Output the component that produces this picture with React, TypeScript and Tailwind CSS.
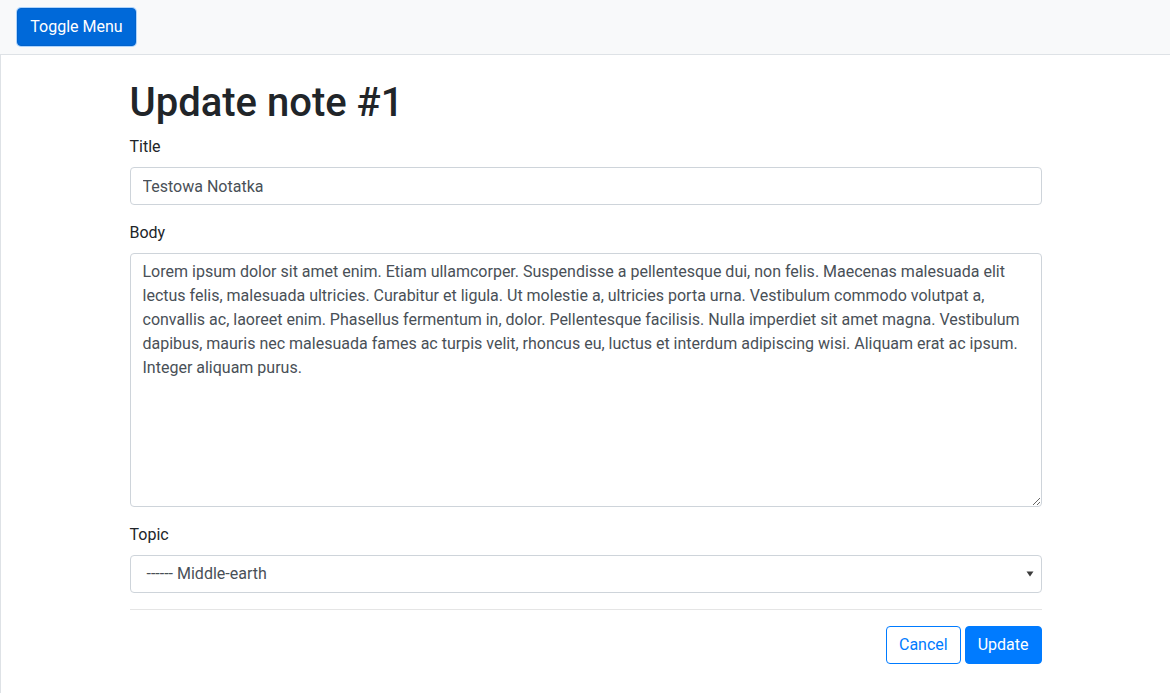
import React from "react";

const body =
  "Lorem ipsum dolor sit amet enim. Etiam ullamcorper. Suspendisse a pellentesque dui, non felis. Maecenas malesuada elit lectus felis, malesuada ultricies. Curabitur et ligula. Ut molestie a, ultricies porta urna. Vestibulum commodo volutpat a, convallis ac, laoreet enim. Phasellus fermentum in, dolor. Pellentesque facilisis. Nulla imperdiet sit amet magna. Vestibulum dapibus, mauris nec malesuada fames ac turpis velit, rhoncus eu, luctus et interdum adipiscing wisi. Aliquam erat ac ipsum. Integer aliquam purus.";

export default function App() {
  return (
    <div
      className="min-h-[693px] bg-white text-[#212529] text-base leading-6"
      style={{ fontFamily: "Roboto, 'Noto Sans', 'Liberation Sans', sans-serif" }}
    >
      <nav className="h-[55px] bg-[#f8f9fa] border-b border-[#dee2e6] pl-[17px] pr-4 flex items-center">
        <button className="h-[38px] w-[119px] rounded-[4px] bg-[#0069d9] text-white border border-[#0062cc] shadow-[0_0_0_1px_rgba(38,143,255,0.35)] text-base leading-6">
          Toggle Menu
        </button>
      </nav>
      <div className="border-l border-[#dee2e6] min-h-[638px]">
        <div className="w-[912px] mx-auto pt-6">
          <h1 className="text-[40px] leading-[48px] font-medium mb-2 text-[#212529]">Update note #1</h1>
          <div className="mb-4">
            <label className="block mb-2">Title</label>
            <input
              readOnly
              defaultValue="Testowa Notatka"
              className="block w-full h-[38px] px-3 py-1.5 border border-[#ced4da] rounded-[4px] text-[#495057] text-base leading-6 outline-none"
            />
          </div>
          <div className="mb-4">
            <label className="block mb-2">Body</label>
            <textarea
              readOnly
              defaultValue={body}
              className="block w-full h-[254px] px-3 py-1.5 border border-[#ced4da] rounded-[4px] text-[#495057] text-base leading-6 outline-none resize-y"
            />
          </div>
          <div className="mb-4">
            <label className="block mb-2">Topic</label>
            <div className="flex items-center justify-between h-[38px] pl-4 pr-[6px] border border-[#ced4da] rounded-[4px] text-[#495057]">
              <span>------ Middle-earth</span>
              <svg width="8" height="6" viewBox="0 0 8 6" className="mr-[1px]">
                <path d="M0.5 0.5 L7.5 0.5 L4 5.5 Z" fill="#3c3c3c" />
              </svg>
            </div>
          </div>
          <hr className="border-0 border-t border-[rgba(0,0,0,0.1)] my-4" />
          <div className="flex justify-end gap-1">
            <button className="h-[38px] px-3 rounded-[4px] border border-[#007bff] text-[#007bff] bg-white text-base leading-6">
              Cancel
            </button>
            <button className="h-[38px] px-3 rounded-[4px] border border-[#007bff] bg-[#007bff] text-white text-base leading-6">
              Update
            </button>
          </div>
        </div>
      </div>
    </div>
  );
}
